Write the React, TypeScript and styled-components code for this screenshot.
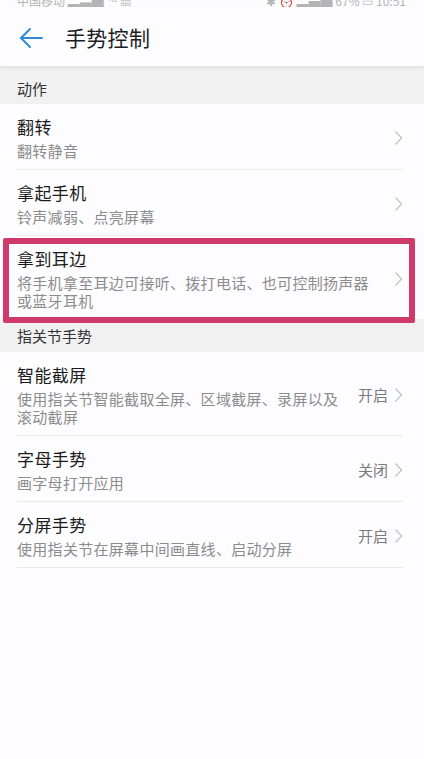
import React from 'react';
import styled, { createGlobalStyle } from 'styled-components';

const GlobalStyle = createGlobalStyle`
  html, body {
    margin: 0;
    padding: 0;
    background: #fdfcfe;
  }
  body {
    font-family: "Noto Sans CJK SC", "Noto Sans", sans-serif;
    -webkit-font-smoothing: antialiased;
  }
`;

type Item = {
  title: string;
  desc: string;
  value?: string;
  highlight?: boolean;
  last?: boolean;
};

const actions: Item[] = [
  { title: '翻转', desc: '翻转静音' },
  { title: '拿起手机', desc: '铃声减弱、点亮屏幕' },
  {
    title: '拿到耳边',
    desc: '将手机拿至耳边可接听、拨打电话、也可控制扬声器或蓝牙耳机',
    highlight: true,
    last: true,
  },
];

const knuckles: Item[] = [
  { title: '智能截屏', desc: '使用指关节智能截取全屏、区域截屏、录屏以及滚动截屏', value: '开启' },
  { title: '字母手势', desc: '画字母打开应用', value: '关闭' },
  { title: '分屏手势', desc: '使用指关节在屏幕中间画直线、启动分屏', value: '开启' },
];

function Chevron() {
  return (
    <ChevronIcon viewBox="0 0 9 16" width="9" height="16">
      <polyline points="1.5,1.5 7.5,8 1.5,14.5" fill="none" stroke="#c6c6c8" strokeWidth="1.4" />
    </ChevronIcon>
  );
}

function BackArrow() {
  return (
    <svg viewBox="0 0 24 22" width="24" height="22">
      <g fill="none" stroke="#2f8bd6" strokeWidth="2" strokeLinecap="round" strokeLinejoin="round">
        <line x1="2" y1="11" x2="23" y2="11" />
        <polyline points="11,2 2,11 11,20" />
      </g>
    </svg>
  );
}

function SettingRow({ item }: { item: Item }) {
  return (
    <Row $last={item.last} $highlight={item.highlight}>
      <RowText>
        <RowTitle>{item.title}</RowTitle>
        <RowDesc>{item.desc}</RowDesc>
      </RowText>
      <RowRight>
        {item.value && <RowValue>{item.value}</RowValue>}
        <Chevron />
      </RowRight>
    </Row>
  );
}

export default function App() {
  return (
    <Page>
      <GlobalStyle />
      {/* status bar is cropped at the top edge of the screenshot */}
      <StatusBar>
        <StatusText>中国移动 ▂▃▅ ⁴ᴳ ▦</StatusText>
        <StatusText>✱ ⏰ ▂▄▆ 67% ▭ 10:51</StatusText>
      </StatusBar>
      <Header>
        <BackButton>
          <BackArrow />
        </BackButton>
        <HeaderTitle>手势控制</HeaderTitle>
      </Header>
      <SectionHeader $first>动作</SectionHeader>
      {actions.map((item) => (
        <SettingRow key={item.title} item={item} />
      ))}
      <SectionHeader>指关节手势</SectionHeader>
      {knuckles.map((item) => (
        <SettingRow key={item.title} item={item} />
      ))}
    </Page>
  );
}

const Page = styled.div`
  width: 424px;
  min-height: 759px;
  background: #fdfcfe;
  display: flex;
  flex-direction: column;
`;

const StatusBar = styled.div`
  height: 7px;
  overflow: hidden;
  display: flex;
  align-items: flex-end;
  justify-content: space-between;
  padding: 0 18px 0 17px;
`;

const StatusText = styled.span`
  font-size: 12px;
  line-height: 12px;
  color: #b4b4b6;
  white-space: nowrap;
  flex-shrink: 0;
`;

const Header = styled.div`
  height: 59px;
  display: flex;
  align-items: center;
  padding-left: 19px;
  gap: 22px;
  background: #fdfcfe;
  box-shadow: 0 2px 4px rgba(0, 0, 0, 0.07);
  position: relative;
  z-index: 1;
`;

const BackButton = styled.div`
  display: flex;
  align-items: center;
  padding-top: 2px;
`;

const HeaderTitle = styled.div`
  font-size: 21px;
  line-height: 28px;
  color: #1c1c1c;
  letter-spacing: 0.3px;
`;

const SectionHeader = styled.div<{ $first?: boolean }>`
  background: #f1f1f2;
  height: ${(p) => (p.$first ? 38 : 33)}px;
  box-sizing: border-box;
  padding: ${(p) => (p.$first ? '13px' : '7px')} 17px 0;
  font-size: 15px;
  line-height: 20px;
  color: #333;
`;

const Row = styled.div<{ $last?: boolean; $highlight?: boolean }>`
  position: relative;
  display: flex;
  align-items: center;
  gap: 12px;
  margin: 0 21px 0 17px;
  padding: 11px 0 9px;
  border-bottom: ${(p) => (p.$last ? 'none' : '1px solid #e9e9eb')};

  ${(p) =>
    p.$highlight &&
    `
    &::after {
      content: '';
      position: absolute;
      top: 2px;
      bottom: -4px;
      left: -14px;
      right: -12px;
      border: 6px solid #cf3a6b;
      border-radius: 2px;
      pointer-events: none;
    }
  `}
`;

const RowText = styled.div`
  flex: 1;
  min-width: 0;
  display: flex;
  flex-direction: column;
  gap: 3px;
`;

const RowTitle = styled.div`
  font-size: 17px;
  line-height: 24px;
  color: #1b1b1b;
  letter-spacing: 0.4px;
`;

const RowDesc = styled.div`
  font-size: 15px;
  line-height: 18px;
  color: #8c8c8e;
  letter-spacing: 0.3px;
`;

const RowRight = styled.div`
  display: flex;
  align-items: center;
  gap: 6px;
  flex-shrink: 0;
`;

const RowValue = styled.span`
  font-size: 15px;
  line-height: 20px;
  color: #7a7a7c;
`;

const ChevronIcon = styled.svg`
  display: block;
`;
